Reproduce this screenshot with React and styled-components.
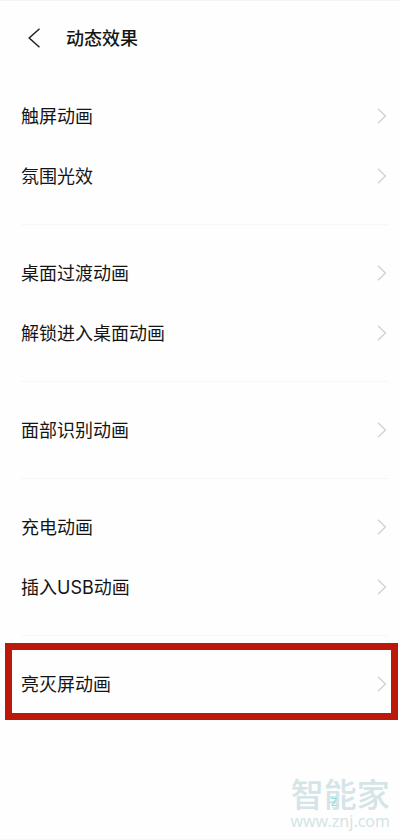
import React from "react";
import styled, { createGlobalStyle } from "styled-components";

const GlobalStyle = createGlobalStyle`
  * {
    box-sizing: border-box;
  }

  body {
    margin: 0;
    background: #fefefe;
    color: #151515;
    font-family: Inter, "Noto Sans CJK SC", sans-serif;
  }
`;

// ------------------ Styled Components ------------------
const Page = styled.div`
  display: flex;
  flex-direction: column;
  min-height: 100vh;
  border-top: 1px solid #f5f5f5;
  border-bottom: 1px solid #f7f7f7;
`;

const Header = styled.header`
  display: flex;
  align-items: center;
  gap: 20px;
  height: 74px;
  padding: 0 22px;
`;

const BackButton = styled.button`
  display: flex;
  padding: 0;
  border: 0;
  background: none;
  color: #222;
  cursor: pointer;
`;

const Title = styled.h1`
  margin: 0;
  padding-top: 2px;
  font-size: 18px;
  line-height: 24px;
  font-weight: 500;
`;

/* ---------- Settings list ---------- */
const Main = styled.main`
  flex: 1;
  padding: 11px 11px 0 21px;
`;

const Group = styled.ul`
  list-style: none;
  margin: 0;
  padding: 0;

  & + & {
    margin-top: 18px;
    padding-top: 18px;
    border-top: 1px solid #f7f7f7;
  }
`;

const Item = styled.li`
  position: relative;
`;

const Row = styled.button`
  display: flex;
  align-items: center;
  justify-content: space-between;
  width: 100%;
  height: 60px;
  padding: 0 2px 0 0;
  border: 0;
  background: none;
  color: inherit;
  font-family: inherit;
  font-size: 18px;
  line-height: 24px;
  font-weight: 400;
  text-align: left;
  cursor: pointer;

  svg {
    color: #d2d2d2;
  }
`;

const Label = styled.span`
  padding-top: 2px;
`;

/* Frame drawn over the highlighted row */
const Marker = styled.span`
  position: absolute;
  top: -11px;
  right: -9px;
  bottom: -6px;
  left: -16px;
  border: 7px solid #bb170b;
  pointer-events: none;
`;

/* ---------- Watermark ---------- */
const Watermark = styled.footer`
  display: flex;
  flex-direction: column;
  align-items: center;
  align-self: flex-end;
  margin-right: 10px;
  padding-bottom: 8px;
  color: #d5e4e7;
`;

const Brand = styled.span`
  position: relative;
  font-size: 33px;
  line-height: 32px;
  font-weight: 500;
`;

const BrandMark = styled.span`
  position: absolute;
  top: 18px;
  left: 40px;
  color: #7fe3e6;
  font-size: 10px;
  line-height: 10px;
`;

const Site = styled.span`
  font-family: "Noto Sans", sans-serif;
  font-size: 16px;
  line-height: 20px;
`;

// ------------------ Data ------------------
const groups = [
  [{ label: "触屏动画" }, { label: "氛围光效" }],
  [{ label: "桌面过渡动画" }, { label: "解锁进入桌面动画" }],
  [{ label: "面部识别动画" }],
  [{ label: "充电动画" }, { label: "插入USB动画" }],
  [{ label: "亮灭屏动画", marked: true }],
];

const BackIcon = () => (
  <svg width="24" height="24" viewBox="0 0 24 24" fill="none" stroke="currentColor" strokeWidth="1.5" aria-hidden="true">
    <path d="M17.5 2.8 7.2 12l10.3 9.2" />
  </svg>
);

const ArrowIcon = () => (
  <svg width="10" height="16" viewBox="0 0 10 16" fill="none" stroke="currentColor" strokeWidth="1.4" aria-hidden="true">
    <path d="M1 .8 8.4 8 1 15.2" />
  </svg>
);

// ------------------ Component ------------------
const App = () => {
  return (
    <>
      <GlobalStyle />
      <Page>
        <Header>
          <BackButton type="button" aria-label="返回">
            <BackIcon />
          </BackButton>
          <Title>动态效果</Title>
        </Header>

        <Main>
          {groups.map((items) => (
            <Group key={items[0].label}>
              {items.map(({ label, marked }) => (
                <Item key={label}>
                  <Row type="button">
                    <Label>{label}</Label>
                    <ArrowIcon />
                  </Row>
                  {marked && <Marker />}
                </Item>
              ))}
            </Group>
          ))}
        </Main>

        <Watermark>
          <Brand>
            智能家
            <BrandMark>Z</BrandMark>
          </Brand>
          <Site>www.znj.com</Site>
        </Watermark>
      </Page>
    </>
  );
};

export default App;
